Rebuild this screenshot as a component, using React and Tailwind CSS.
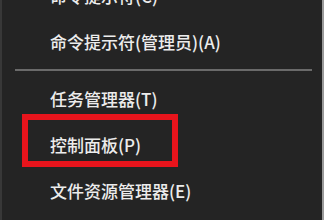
export default function App() {
  const font = { fontFamily: '"Noto Sans CJK SC", "Noto Sans", sans-serif' };
  const Item = ({ children }) => (
    <div className="h-[46px] flex items-center pl-[48px] text-[17px] text-[#ececec] font-medium leading-none" style={font}>
      <span>{children}</span>
    </div>
  );
  return (
    <div className="w-[330px] h-[220px] overflow-hidden bg-white flex">
      <div className="relative w-[322px] h-full bg-[#242424] border-l-2 border-[#383838] overflow-hidden">
        <div className="-mt-[28px] flex flex-col">
          <Item>命令提示符(C)</Item>
          <Item>命令提示符(管理员)(A)</Item>
          <div className="h-[11px] flex items-center pl-[13px] pr-[10px]">
            <div className="h-[2px] w-full bg-[#6a6a6a]" />
          </div>
          <Item>任务管理器(T)</Item>
          <Item>控制面板(P)</Item>
          <Item>文件资源管理器(E)</Item>
        </div>
        <div className="absolute left-[20px] top-[114px] w-[156px] h-[53px] border-[6px] border-[#e8141c]" />
      </div>
      <div className="w-[2px] h-full bg-[#9a9a9a]" />
    </div>
  );
}
